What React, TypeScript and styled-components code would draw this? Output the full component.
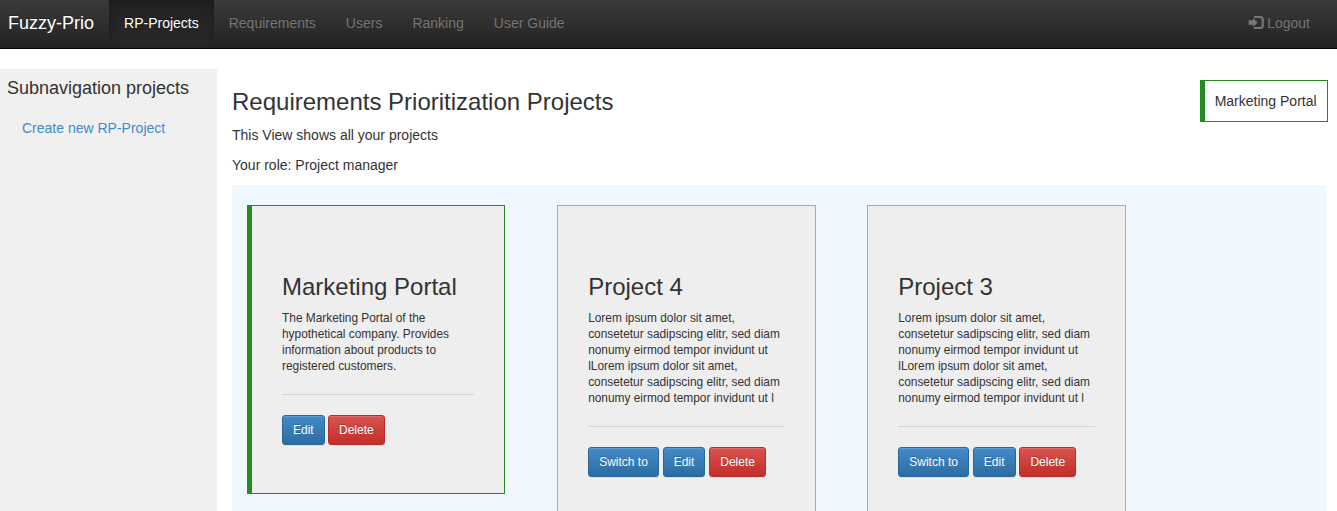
import React from "react";
import styled, { createGlobalStyle, css } from "styled-components";

const GlobalStyle = createGlobalStyle`
  *, *::before, *::after { box-sizing: border-box; }
  html, body, #root { height: 100%; }
  body {
    margin: 0;
    overflow: hidden;
    background: #fff;
    color: #333;
    font: 14px/20px "Liberation Sans", Arial, sans-serif;
  }
`;

const Page = styled.div`
  display: flex;
  flex-direction: column;
  height: 100vh;
  overflow: hidden;
`;

const Navbar = styled.nav`
  flex: none;
  display: flex;
  height: 49px;
  padding-right: 12px;
  border-bottom: 1px solid #080808;
  background: linear-gradient(to bottom, #3b3b3b 0%, #222 100%);
  text-shadow: 0 -1px 0 rgba(0, 0, 0, 0.25);
`;

const Brand = styled.a`
  padding: 13px 15px 15px 8px;
  color: #fff;
  font-size: 18px;
  white-space: nowrap;
`;

const NavItem = styled.a<{ $active?: boolean; $end?: boolean }>`
  display: flex;
  gap: 3px;
  padding: 13px 15px 15px;
  color: #777;
  white-space: nowrap;
  ${(p) => p.$end && css`margin-left: auto;`}
  ${(p) =>
    p.$active &&
    css`
      color: #fff;
      background: linear-gradient(to bottom, #222 0%, #282828 100%);
      box-shadow: inset 0 1px 9px rgba(0, 0, 0, 0.25);
    `}
`;

const LoginIcon = styled.svg`
  width: 16px;
  height: 14px;
  margin-top: 3px;
  fill: currentColor;
`;

const Body = styled.div`
  flex: 1;
  display: flex;
  min-height: 0;
  padding-top: 20px;
`;

const Sidebar = styled.aside`
  flex: none;
  width: 217px;
  padding: 9px 7px;
  background: #f0f0f0;
`;

const SidebarTitle = styled.h4`
  margin: 0 0 10px;
  font-size: 18px;
  font-weight: 400;
  line-height: 20px;
`;

const SidebarLink = styled.a`
  display: block;
  padding: 10px 15px;
  color: #428bca;
`;

const Main = styled.main`
  flex: 1;
  min-width: 0;
  padding: 11px 11px 0 15px;
`;

const Header = styled.header`
  display: flex;
  justify-content: space-between;
  align-items: flex-start;
  height: 105px;
  margin-right: -2px;
`;

const Title = styled.h3`
  margin: 9px 0 10px;
  font-size: 24px;
  font-weight: 400;
  line-height: 26px;
`;

const Text = styled.p`
  margin: 0 0 10px;
`;

const CurrentProject = styled.div`
  padding: 10px 10.4px 10px 9.6px;
  border: 1px solid #228b22;
  border-left-width: 5px;
  white-space: nowrap;
`;

const Board = styled.section`
  display: flex;
  align-items: flex-start;
  gap: 51.7px;
  min-height: 400px;
  padding: 20px 15px;
  background: #eff7ff;
`;

const Card = styled.article<{ $current?: boolean }>`
  flex: none;
  width: 258.45px;
  padding: 48px 30px;
  border: 1px solid ${(p) => (p.$current ? "#228b22" : "#a9a9a9")};
  ${(p) => p.$current && css`border-left-width: 5px;`}
  background: #eee;
`;

const CardTitle = styled.h3`
  margin: 20px 0 10px;
  font-size: 24px;
  font-weight: 400;
  line-height: 26.4px;
`;

const CardText = styled.p`
  margin: 0;
  font-size: 11.9px;
  line-height: 16px;
`;

const Divider = styled.hr`
  height: 1px;
  margin: 20px 0;
  border: 0;
  background: #d5d5d5;
`;

const Actions = styled.div<{ $tight?: boolean }>`
  display: flex;
  gap: ${(p) => (p.$tight ? "3.33px" : "3.89px")};
`;

const Button = styled.button<{ $danger?: boolean }>`
  height: 30px;
  padding: 5px 10px;
  border: 1px solid ${(p) => (p.$danger ? "#b92c28" : "#2b669a")};
  border-radius: 3px;
  background: ${(p) =>
    p.$danger
      ? "linear-gradient(to bottom, #d9534f 0%, #c12e2a 100%)"
      : "linear-gradient(to bottom, #428bca 0%, #2d6ca2 100%)"};
  box-shadow: inset 0 1px 0 rgba(255, 255, 255, 0.15), 0 1px 1px rgba(0, 0, 0, 0.075);
  color: #fff;
  font: 12px/18px "Liberation Sans", Arial, sans-serif;
  text-shadow: 0 -1px 0 rgba(0, 0, 0, 0.2);
  white-space: nowrap;
`;

const navItems = ["RP-Projects", "Requirements", "Users", "Ranking", "User Guide"];

const lorem =
  "Lorem ipsum dolor sit amet, consetetur sadipscing elitr, sed diam nonumy eirmod tempor invidunt ut lLorem ipsum dolor sit amet, consetetur sadipscing elitr, sed diam nonumy eirmod tempor invidunt ut l";

const projects = [
  {
    name: "Marketing Portal",
    text: "The Marketing Portal of the hypothetical company. Provides information about products to registered customers.",
    current: true,
  },
  { name: "Project 4", text: lorem, current: false },
  { name: "Project 3", text: lorem, current: false },
];

export default function App() {
  return (
    <Page>
      <GlobalStyle />
      <Navbar>
        <Brand>Fuzzy-Prio</Brand>
        {navItems.map((label, i) => (
          <NavItem key={label} $active={i === 0}>
            {label}
          </NavItem>
        ))}
        <NavItem $end>
          <LoginIcon viewBox="0 0 16 14" aria-hidden="true">
            <path d="M6 0H12.3Q15.8 0 15.8 3.5V9.5Q15.8 13 12.3 13H6V11H12Q13.7 11 13.7 9.3V3.7Q13.7 2 12 2H6Z" />
            <path d="M0.6 4.3H5V1.9L9.6 6.5L5 11.1V8.7H0.6Z" />
          </LoginIcon>
          Logout
        </NavItem>
      </Navbar>
      <Body>
        <Sidebar>
          <SidebarTitle>Subnavigation projects</SidebarTitle>
          <SidebarLink>Create new RP-Project</SidebarLink>
        </Sidebar>
        <Main>
          <Header>
            <div>
              <Title>Requirements Prioritization Projects</Title>
              <Text>This View shows all your projects</Text>
              <Text>Your role: Project manager</Text>
            </div>
            <CurrentProject>Marketing Portal</CurrentProject>
          </Header>
          <Board>
            {projects.map((project) => (
              <Card key={project.name} $current={project.current}>
                <CardTitle>{project.name}</CardTitle>
                <CardText>{project.text}</CardText>
                <Divider />
                <Actions $tight={project.current}>
                  {!project.current && <Button>Switch to</Button>}
                  <Button>Edit</Button>
                  <Button $danger>Delete</Button>
                </Actions>
              </Card>
            ))}
          </Board>
        </Main>
      </Body>
    </Page>
  );
}
